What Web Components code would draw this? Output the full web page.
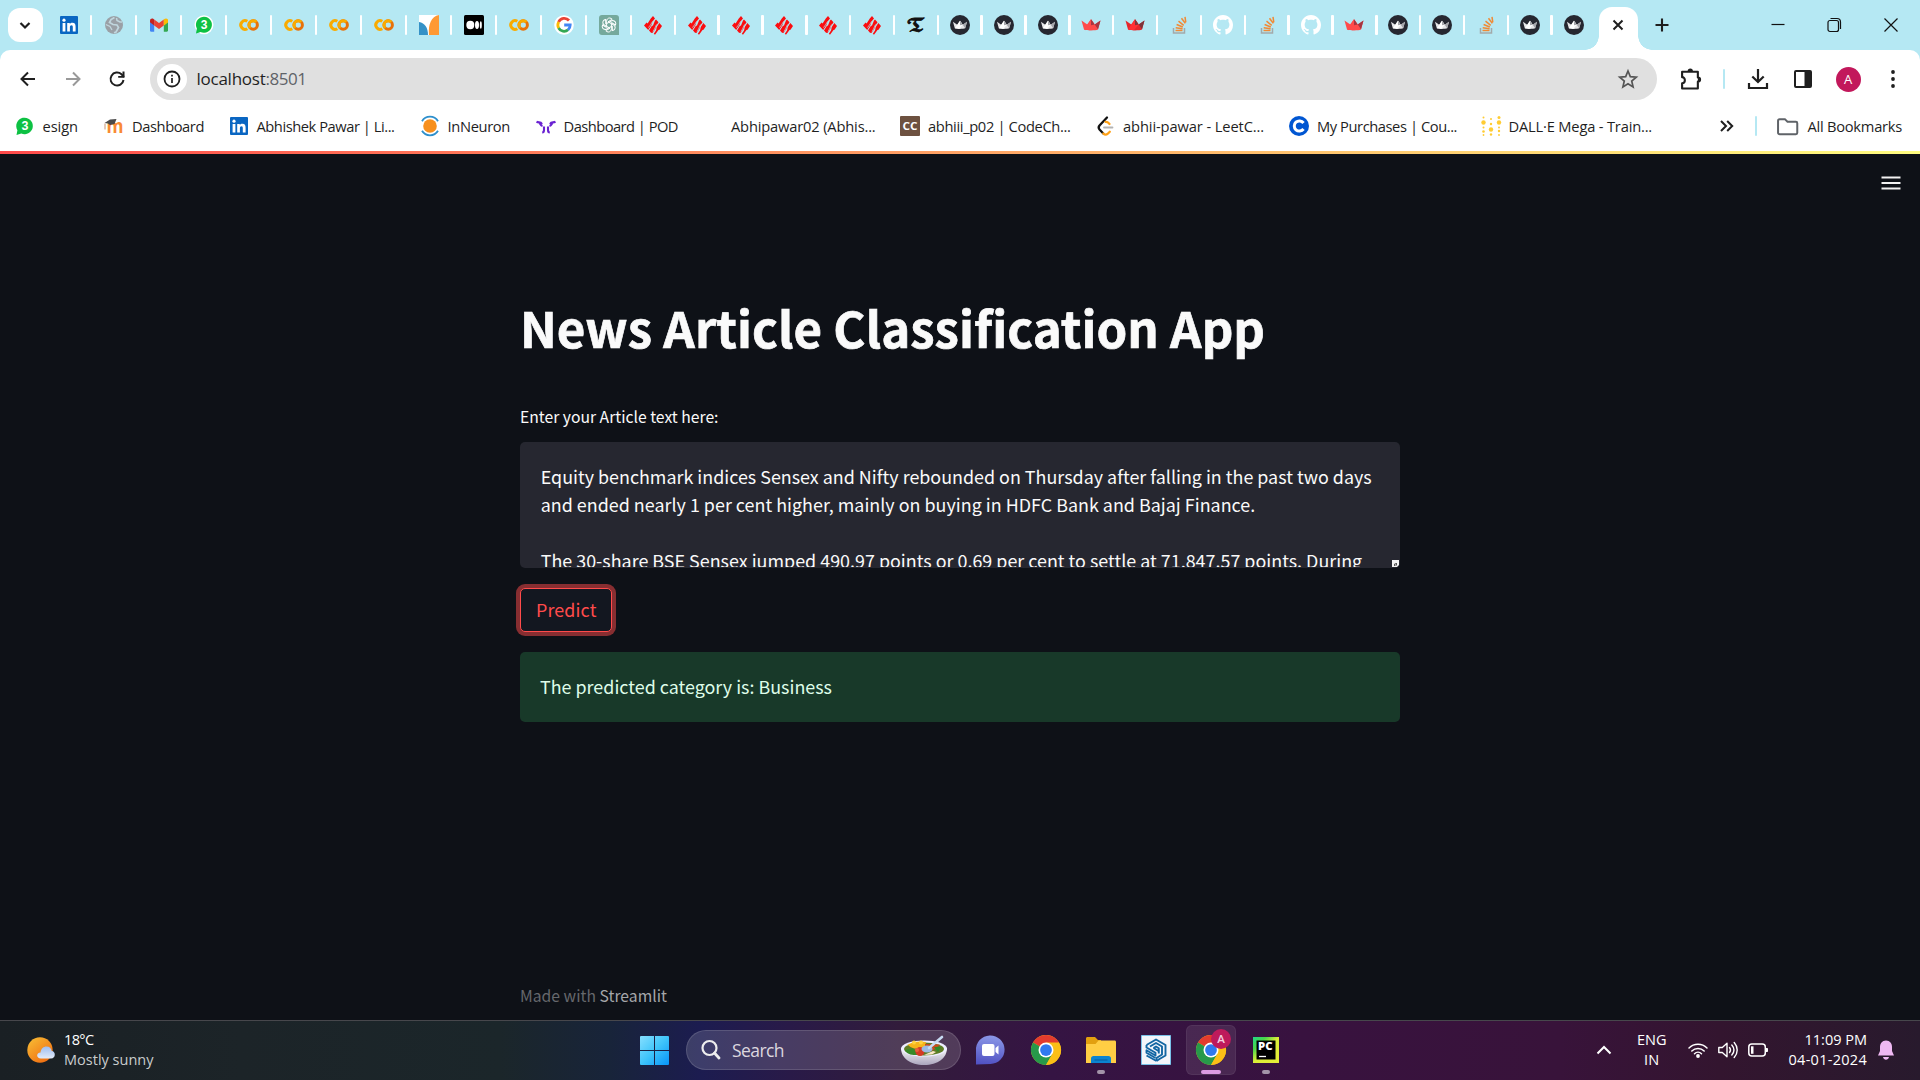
<!DOCTYPE html>
<html lang="en">
<head>
<meta charset="utf-8">
<title>News Article Classification App</title>
<style>
html,body{margin:0;height:100%;overflow:hidden;background:#0e1117}
body{width:1920px;height:1080px}
</style>
</head>
<body>
<desktop-screen></desktop-screen>
<script>
const UI = '"Open Sans","Noto Sans",sans-serif';
const SRC = '"Noto Sans CJK SC","Noto Sans",sans-serif';

const crown = (a,b,c) => `<path d="M.5 5.500 6.300 9.500 10 4.300l3.700 5.200 5.800-4L17 14.500c-2.500 1.200-11.500 1.200-14 0z" fill="${a}"/><path d="M10 4.300l3.700 5.200L9 15.300 3 14.500 6.300 9.500z" fill="${b}"/><path d="M19.500 5.500 13.700 9.500 17 14.300z" fill="${c}"/><path d="M10 4.300v6l3.700-.8z" fill="${c}"/>`;
const chrome = `<circle cx="12" cy="12" r="12" fill="#fbbf16"/><path d="M12 12 1.600 6A12 12 0 0 1 22.400 6z" fill="#e33b2e"/><path d="M1.600 6A12 12 0 0 0 12 24l5.200-9L12 12z" fill="#27994a"/><path d="M12 6H22.400A12 12 0 0 1 12 24l5.200-9z" fill="#fbbf16"/><circle cx="12" cy="12" r="6" fill="#fff"/><circle cx="12" cy="12" r="4.700" fill="#3079ee"/>`;
const ICONS = {
 linkedin:`<rect x="1" y="1" width="18" height="18" rx="1" fill="#0a66c2"/><g fill="#fff"><circle cx="5" cy="5.200" r="1.600"/><path d="M3.600 8h2.800v8.500H3.600zM8.200 8h2.600v1.200C11.300 8.300 12.300 7.800 13.400 7.800c2.500 0 3.200 1.600 3.200 3.900v4.800h-2.800v-4.300c0-1.100-.2-2-1.300-2s-1.600.8-1.600 2v4.300H8.200z"/></g>`,
 globe:`<circle cx="10" cy="10" r="9" fill="#9aa0a6"/><path d="M10.500 2.500 7 4.500l-1.500 3L9 9.500l4 .5 1.500 2.500L12 17l-2 .8" fill="none" stroke="#c0d6de" stroke-width="1.700"/><path d="M12.500 3l.5 2.500 3 1.500h2" fill="none" stroke="#c0d6de" stroke-width="1.500"/><path d="M1.800 9.500 6 11.500 8 15" stroke="#c0d6de" stroke-width="1.300" fill="none"/>`,
 gmail:`<path d="M1 6v9.500c0 .8.500 1.200 1.200 1.200h3V9z" fill="#4285f4"/><path d="M14.800 9v7.700h3c.8 0 1.200-.5 1.200-1.200V6z" fill="#34a853"/><path d="M14.800 4.500 19 5v2.200l-4.200 3.200z" fill="#fbbc04"/><path d="M5.200 10.400V4.400L10 8l4.800-3.600v6L10 14z" fill="#ea4335"/><path d="M1 5.500c0-2 2.200-2.500 3.500-1.600l.7.500v6L1 7.200z" fill="#c5221f"/><path d="M14.800 4.400C16.800 2.900 19 3.500 19 5.500v1.700l-4.200 3.200z" fill="#fbbc04"/>`,
 whatsapp:`<circle cx="10" cy="9.800" r="9.500" fill="#fff"/><path d="M2 18.500 2.900 13.600A8 8 0 1 1 6.500 17z" fill="#0dc143"/><text x="10" y="14.200" text-anchor="middle" font-size="12" font-weight="700" font-family="Liberation Sans" fill="#fff">3</text>`,
 wa2:`<path d="M1.500 19 2.400 14.200A8.300 8.300 0 1 1 6.300 17.600z" fill="#0dc143"/><text x="10" y="14.200" text-anchor="middle" font-size="12.500" font-weight="700" font-family="Liberation Sans" fill="#fff">3</text>`,
 colab:`<g fill="none" stroke-width="3"><circle cx="14.200" cy="10" r="4.200" stroke="#e8710a"/><path d="M8.300 6.300A4.300 4.300 0 1 0 8.300 13.700" stroke="#f9ab00"/><path d="M11.200 13A4.200 4.200 0 0 1 17.200 7" stroke="#f9ab00"/></g>`,
 bars:`<path d="M0 0h20v20H0z" fill="#fff"/><path d="M0 7c6 1 9 6 9 13H0z" fill="#3492c7"/><path d="M10 20c-1-10 2-19 10-20v20z" fill="#ff9933"/>`,
 medium:`<rect width="20" height="20" rx="1.500" fill="#000"/><ellipse cx="6.300" cy="10" rx="4" ry="4.200" fill="#fff"/><ellipse cx="13" cy="10" rx="2" ry="4" fill="#fff"/><ellipse cx="16.800" cy="10" rx="1" ry="3.700" fill="#fff"/>`,
 google:`<circle cx="10" cy="10" r="9.800" fill="#fff"/><g fill="none" stroke-width="2.800"><path d="M15 5.500A6.200 6.200 0 0 0 4.600 7" stroke="#ea4335"/><path d="M4.700 6.900a6.300 6.300 0 0 0 0 6.200" stroke="#fbbc05"/><path d="M4.600 13a6.200 6.200 0 0 0 9.500 1.800" stroke="#34a853"/><path d="M14 14.900c1.500-1.300 2.200-3 2.200-4.900H10.200" stroke="#4285f4"/></g>`,
 openai:`<path d="M3 0h14a3 3 0 0 1 3 3v17H3a3 3 0 0 1-3-3V3a3 3 0 0 1 3-3z" fill="#75a99c"/><g fill="none" stroke="#fff" stroke-width="1">${[0,60,120,180,240,300].map(a=>`<path transform="rotate(${a} 10 10)" d="M7.600 11.400V6.200c0-1.900 1.400-3.200 3-3.200 1.100 0 2 .5 2.600 1.300L9 6.800"/>`).join('')}</g>`,
 ie:`<g fill="#fb0d10"><path d="M1 10.500 3.600 7.500 4.600 8.500 7.800 3.500 10 1l2 2.500-2.500 3-1 3.500-3.300 5z"/><path d="M6 15.500 8.800 11 10 10.500l2-5 1-1 2.500 2.700-2.300 3.500-1 3.200-2.800 4.200L8 17.700z"/></g><path d="M10.800 18.700 13 15.500l.8-3.500 2.500-4 2.700 3-2.500 3.700-1 .3-3.500 4.700z" fill="#fb0d10"/><path d="M5.200 12.500 7 10.800 9.500 6.500M10 16.500l1.500-2.500 2-4.500" stroke="#b5e8f3" stroke-width=".7" fill="none"/>`,
 nyt:`<text x="10" y="16.800" text-anchor="middle" font-size="19" font-family="DejaVu Math TeX Gyre, DejaVu Serif, DejaVu Sans" fill="#111" stroke="#111" stroke-width=".8">𝕿</text>`,
 crownDark:`<circle cx="10" cy="10" r="10" fill="#262730"/><g transform="translate(2.600 2.600) scale(.74)">${crown('#e6e6e8','#fff','#a5a5aa')}</g>`,
 crownRed:crown('#ff4b4b','#ff4b4b','#a53742'),
 crownRed2:crown('#e5262b','#ff2f34','#7d353b'),
 stack:`<path d="M4.500 13v5h11v-5" fill="none" stroke="#a3a9aa" stroke-width="1.500"/><g stroke="#f08a35" stroke-width="1.500"><path d="M6.500 15.500h7M6.700 12.700l6.900 1M7.600 9.500l6.200 2.500M9.500 6.200l5.200 4.200M12.500 3.200l3.800 5.200M16 1.800l.8 5.500"/></g>`,
 github:`<path fill="#fff" transform="scale(1.250)" d="M8 0C3.580 0 0 3.580 0 8c0 3.540 2.290 6.530 5.470 7.590.4.070.55-.17.55-.38 0-.19-.01-.82-.01-1.490-2.010.370-2.530-.490-2.690-.940-.090-.230-.480-.940-.820-1.130-.280-.150-.680-.520-.010-.530.630-.010 1.080.580 1.230.820.720 1.210 1.870.870 2.330.660.070-.520.280-.870.510-1.070-1.780-.200-3.640-.890-3.640-3.950 0-.870.310-1.590.820-2.150-.080-.200-.360-1.020.080-2.120 0 0 .670-.210 2.200.820.640-.180 1.320-.270 2-.270s1.360.090 2 .270c1.530-1.040 2.200-.820 2.200-.820.440 1.100.160 1.920.080 2.120.510.560.820 1.270.820 2.150 0 3.070-1.870 3.750-3.650 3.950.290.250.540.730.540 1.480 0 1.070-.010 1.930-.010 2.200 0 .210.150.460.550.380A8.010 8.010 0 0 0 16 8c0-4.420-3.580-8-8-8z"/>`,
 moodle:`<text x="11" y="17" text-anchor="middle" font-size="20" font-weight="700" font-family="Open Sans" fill="#f98a35" textLength="17" lengthAdjust="spacingAndGlyphs">m</text><path d="M.5 7 6 3.500l6.500-.5-2 5-4.500 1-2-1.500z" fill="#4b4b4b"/><path d="M1 7.500v6" stroke="#d9b9a3" stroke-width="1.500"/>`,
 inneuron:`<circle cx="10" cy="10" r="6.800" fill="#f7901e"/><g fill="none" stroke="#2d8fcc" stroke-width="1.800"><path d="M2 5.200a9.300 9.300 0 0 1 16 0M2 14.800a9.300 9.300 0 0 0 16 0"/></g>`,
 pod:`<g fill="none" stroke="#6a22d2" stroke-width="2.100"><path d="M.5 5.800C3 7 4.500 5.500 6 8M19.500 5.800C17 7 15.500 5.500 14 8"/><path d="M3.500 7c1 1 1.200 2.500 3 3M16.500 7c-1 1-1.200 2.500-3 3"/><path d="M8 10.500v3.500c0 1.500-.8 2.500-1.800 2.500M12 10.500v3.500c0 1.500.8 2.500 1.800 2.500"/></g>`,
 blank:``,
 codechef:`<rect width="20" height="20" rx="1" fill="#6d5140"/><text x="10" y="14" text-anchor="middle" font-size="11" font-weight="700" font-family="Open Sans" textLength="15" lengthAdjust="spacingAndGlyphs" fill="#fff">CC</text>`,
 leet:`<g fill="none" stroke-linecap="round" stroke-width="2.300"><path d="M12 1.500 4.500 9.500c-1 1.200-1 2.800 0 4l3.800 4" stroke="#111"/><path d="M8.300 17.500c1.400 1.400 3.200 1.300 4.500.2l2-2M10.500 5.800c1.200 0 1.900.1 2.500.700l1.500 1.500" stroke="#ffa116"/><path d="M9 11.500h8.500" stroke="#b3b3b3" stroke-width="1.800"/></g>`,
 coursera:`<circle cx="10" cy="10" r="10" fill="#0056d2"/><path d="M14.500 7A5.100 5.100 0 1 0 14.500 13" fill="none" stroke="#fff" stroke-width="3"/>`,
 dots:`<g fill="#ffcc33"><circle cx="2.500" cy="1.500" r="1"/><circle cx="2.500" cy="6.500" r="2.200"/><circle cx="2.500" cy="11.500" r="1"/><circle cx="2.500" cy="15.500" r="1.300"/><circle cx="2.500" cy="19" r=".9"/><circle cx="10" cy="3" r="1"/><circle cx="10" cy="8" r="1.200"/><circle cx="10" cy="13.500" r="2.200"/><circle cx="10" cy="18.500" r="1.200"/><circle cx="18" cy="1.500" r="1.500"/><circle cx="18" cy="6.500" r="2.200"/><circle cx="18" cy="11.500" r="1"/><circle cx="18" cy="15" r="1.200"/><circle cx="18" cy="19" r=".9"/></g>`,
 chevDown:`<path d="m5.500 8 4.500 4.500L14.500 8" fill="none" stroke="#1f1f1f" stroke-width="2.200"/>`,
 back:`<path d="M17 10H4M10 3.500 3.500 10l6.500 6.500" fill="none" stroke="#1f1f1f" stroke-width="2"/>`,
 fwd:`<path d="M3 10h13M10 3.500l6.500 6.500-6.500 6.500" fill="none" stroke="#999" stroke-width="2"/>`,
 reload:`<path d="M16.500 11a6.500 6.500 0 1 1-2-5.700L17 8" fill="none" stroke="#1f1f1f" stroke-width="2"/><path d="M17.500 2.500v6.300h-6.300V6.900h4.300V2.500z" fill="#1f1f1f"/>`,
 info:`<circle cx="10" cy="10" r="7.500" fill="none" stroke="#1f1f1f" stroke-width="1.800"/><path d="M10 9v5M10 5.800v1.700" stroke="#1f1f1f" stroke-width="1.700"/>`,
 star:`<path d="m10 2 2.300 5.600 6 .5-4.600 3.900 1.400 5.900L10 14.800l-5.100 3.100 1.400-5.900-4.600-3.900 6-.5z" fill="none" stroke="#555" stroke-width="1.700"/>`,
 puzzle:`<path d="M2 3.500h15v5.500c2.800 0 2.800 4 0 4V19.500H2v-5c3.500 0 3.500-5.800 0-5.800z" fill="none" stroke="#1f1f1f" stroke-width="2" stroke-linejoin="round"/><path d="M7.300 3a2.500 2.500 0 0 1 5 0z" fill="#1f1f1f"/><path d="M17 8.500c3.600 0 3.600 5 0 5z" fill="#1f1f1f"/>`,
 download:`<path d="M10 0v12.500M4.300 7.500 10 13l5.700-5.500M1 14v5h18v-5" fill="none" stroke="#1f1f1f" stroke-width="2.200"/>`,
 panel:`<rect x="2" y="2" width="16" height="16" rx="1" fill="none" stroke="#1f1f1f" stroke-width="2"/><path d="M11.500 2H18v16h-6.500z" fill="#1f1f1f"/>`,
 more:`<g fill="#1f1f1f"><circle cx="10" cy="3" r="1.900"/><circle cx="10" cy="10" r="1.900"/><circle cx="10" cy="17" r="1.900"/></g>`,
 folder:`<path d="M1 4.500c0-.9.500-1.500 1.500-1.500h5L10 5.500h8c.8 0 1.300.5 1.300 1.300V16c0 .8-.5 1.300-1.300 1.300H2.500C1.600 17.300 1 16.800 1 16z" fill="none" stroke="#5f6368" stroke-width="1.900"/>`,
 more2:`<path d="m4 5 5 5-5 5M10.200 5l5 5-5 5" fill="none" stroke="#1f1f1f" stroke-width="2"/>`,
 close:`<path d="m5.500 5.500 9 9m0-9-9 9" stroke="#1f1f1f" stroke-width="2"/>`,
 plus:`<path d="M10 3.500v13M3.500 10h13" stroke="#1f1f1f" stroke-width="2.100"/>`,
 min:`<path d="M3.500 9.500h13" stroke="#111" stroke-width="1.200"/>`,
 restore:`<rect x="4" y="5.500" width="10.500" height="11" rx="2" fill="none" stroke="#111" stroke-width="1.200"/><path d="M6.500 3.500H13A3.500 3.500 0 0 1 16.500 7v7" fill="none" stroke="#111" stroke-width="1.200"/>`,
 winclose:`<path d="m3.500 3.500 13 13m0-13-13 13" stroke="#111" stroke-width="1.200"/>`,
 burger:`<path d="M.5 4.500h19M.5 10h19M.5 15.500h19" stroke="#f2f2f2" stroke-width="1.900"/>`,
 weather:`<defs><linearGradient id="a" x1="0" y1="0" x2=".8" y2="1"><stop offset="0" stop-color="#f8c036"/><stop offset="1" stop-color="#ef6a10"/></linearGradient><linearGradient id="b" x1="0" y1="0" x2="0" y2="1"><stop offset="0" stop-color="#9dbdf2"/><stop offset="1" stop-color="#e3ebf9"/></linearGradient></defs><circle cx="13" cy="13" r="12.700" fill="url(#a)"/><path d="M14 21.500c-5 0-5-6-.5-6 .5-4 3-6 6-6s4.800 2 5.200 4.500c4 0 4.500 7.500-.7 7.500z" fill="url(#b)"/>`,
 win:`<defs><linearGradient id="w" x1="0" y1="0" x2="1" y2="1"><stop offset="0" stop-color="#86dfff"/><stop offset=".5" stop-color="#3fc4fa"/><stop offset="1" stop-color="#0794f8"/></linearGradient></defs><path d="M1 0h13v14H0V1a1 1 0 0 1 1-1zM15 0h13a1 1 0 0 1 1 1v13H15zM0 15h14v14H1a1 1 0 0 1-1-1zM15 15h14v13a1 1 0 0 1-1 1H15z" fill="url(#w)"/>`,
 search:`<circle cx="8.500" cy="8" r="7" fill="none" stroke="#eee" stroke-width="2.200"/><path d="m13.500 13 4.500 5" stroke="#eee" stroke-width="2.800" stroke-linecap="round"/>`,
 bowl:`<defs><linearGradient id="c" x1="0" y1="0" x2="0" y2="1"><stop offset="0" stop-color="#fafafa"/><stop offset="1" stop-color="#aaa5bd"/></linearGradient></defs><path d="M0 12c0 10 9 17 23 17s23-7 23-17z" fill="url(#c)"/><ellipse cx="23" cy="12.500" rx="23" ry="8" fill="#eef"/><ellipse cx="23" cy="13" rx="20" ry="6.500" fill="#5e7d25"/><path d="M4 14c2 5 8 5 12 5l-4-7z" fill="#398a27"/><path d="M6 9c6-4 14-4 19-3l-1 5c-6 2-12 3-17-2z" fill="#f6b51b"/><circle cx="13" cy="6.500" r="2" fill="#ffd23c"/><circle cx="20" cy="6.500" r="2" fill="#ffd23c"/><path d="M24 8 39 8.500l-7 6-8 0z" fill="#c84b1d"/><path d="M33 11h7l-3 5z" fill="#2f8b2b"/><circle cx="19" cy="15.500" r="4.500" fill="#d43b25"/><circle cx="16" cy="14" r="2" fill="#e8613e"/><path d="M23 19l9-4 3 1-4 2.500z" fill="#fbe7c7"/><ellipse cx="26" cy="13" rx="5.500" ry="3.500" fill="#9cbce5"/><path d="m28 12 13-11" stroke="#c8dcf3" stroke-width="2.600" stroke-linecap="round"/>`,
 chat:`<defs><linearGradient id="d" x1=".6" y1="0" x2=".5" y2="1"><stop offset="0" stop-color="#8c99e8"/><stop offset="1" stop-color="#5152c3"/></linearGradient></defs><path d="M0 28.500V14.500A14.300 14.300 0 1 1 14.500 28z" fill="url(#d)"/><rect x="6" y="8" width="12.500" height="12" rx="2" fill="#fff"/><path d="m19.500 12 3-2.500v9l-3-2.500z" fill="#fff"/>`,
 chrome,
 explorer:`<path d="M0 3.500C0 2.500.7 2 1.500 2h7.500l3 3H15v6H0z" fill="#e2a00f"/><path d="M0 9h9.500l3-3.500H28.500c1 0 1.500.6 1.500 1.500v21H0z" fill="#ffce44"/><path d="M5 28v-4.500c0-1.500 1-2.500 2.500-2.500h15c1.500 0 2.500 1 2.500 2.500V28z" fill="#0b84d0"/><path d="M8.500 25h13" stroke="#075a9c" stroke-width="1"/>`,
 sketchup:`<path d="M.5.500h29v29H.5z" fill="#f3f5fa" stroke="#79c1e8"/><g fill="none" stroke="#1266a3" stroke-width="1.900" stroke-linejoin="round"><path d="M5.500 10 15 4.500l9.500 5.500v10.500l-6 3.500-3 2"/><path d="M9 11.500l6-3.500 6 3.500v8L15.500 23v3"/><path d="M12.500 13 15 11.500l2.800 1.700v5.300"/><path d="M5.500 10v2.500l9 5.200v2.800l-9-5.200v2.500l9 5.200M5.500 20.500 15.500 26M12.500 13l5 3"/></g>`,
 pycharm:`<defs><linearGradient id="p" x1="0" y1="0" x2="1" y2="1"><stop offset="0" stop-color="#21d789"/><stop offset=".25" stop-color="#49d64a"/><stop offset=".5" stop-color="#dbee37"/><stop offset="1" stop-color="#e6ee38"/></linearGradient></defs><rect width="26" height="26" fill="url(#p)"/><path d="M3.500 3.500h19v19h-19z" fill="#000"/><text x="5" y="13" font-family="Open Sans" font-weight="800" font-size="10" textLength="14.500" lengthAdjust="spacingAndGlyphs" fill="#fff">PC</text><path d="M6 19.500h7" stroke="#fff" stroke-width="1.300"/>`,
 up:`<path d="m3.500 13.500 6.500-6.500 6.500 6.500" fill="none" stroke="#fff" stroke-width="2"/>`,
 wifi:`<g fill="none" stroke="#fff" stroke-width="1.500" stroke-linecap="round"><path d="M1 8a12.800 12.800 0 0 1 18 0M3.800 11a8.800 8.800 0 0 1 12.400 0M6.500 13.700a5 5 0 0 1 7 0"/></g><circle cx="10" cy="16" r="1.900" fill="#fff"/>`,
 speaker:`<path d="M.8 7.500h3.500L9 3.200v13.600l-4.700-4.300H.8z" fill="none" stroke="#fff" stroke-width="1.400" stroke-linejoin="round"/><g fill="none" stroke="#fff" stroke-width="1.400" stroke-linecap="round"><path d="M11.500 7.500c1.200 1.500 1.200 3.500 0 5M13.800 5c2.600 3 2.600 7 0 10M16.200 2.500c4 4.500 4 10.500 0 15"/></g>`,
 battery:`<rect x=".8" y="4" width="16.500" height="12" rx="3" fill="none" stroke="#fff" stroke-width="1.500"/><path d="M3 6.300h2.500v7.500H3z" fill="#fff"/><path d="M18 8h1c.7 0 1 .5 1 1v2c0 .5-.3 1-1 1h-1z" fill="#fff"/>`,
 bell:`<path d="M10 .5c-4 0-6 3-6 6.500V11l-2 4.500h16L16 11V7c0-3.500-2-6.500-6-6.500zM7 17h6c-.4 1.800-1.600 2.700-3 2.700S7.400 18.800 7 17z" fill="#efb8f2"/>`
};

class UiIcon extends HTMLElement{
  connectedCallback(){
    const w=this.getAttribute('w')||20,h=this.getAttribute('h')||w,vb=this.getAttribute('box')||'0 0 20 20';
    this.attachShadow({mode:'open'}).innerHTML=`<style>:host{display:block;flex:none;width:${w}px;height:${h}px}svg{display:block;width:100%;height:100%;overflow:visible}</style><svg viewBox="${vb}">${ICONS[this.getAttribute('name')]}</svg>`;
  }
}
customElements.define('ui-icon',UiIcon);

/* A single line of text whose tracking is adjusted to fill a given advance width. */
class FitText extends HTMLElement{
  connectedCallback(){
    const r=this.attachShadow({mode:'open'});
    r.innerHTML=`<style>:host{display:block;flex:none;white-space:pre}span{display:inline-block}</style><span><slot></slot></span>`;
    const s=r.querySelector('span'),w=+this.getAttribute('w');
    s.style.letterSpacing='0px';
    const n=[...this.textContent].length,nat=s.getBoundingClientRect().width;
    s.style.letterSpacing=((w-nat)/n)+'px';
    this.style.width=w+'px';
  }
}
customElements.define('fit-text',FitText);

class TabStrip extends HTMLElement{
  connectedCallback(){
    const a='linkedin globe gmail whatsapp colab colab colab colab bars medium colab google openai'.split(' ');
    const b='ie ie ie ie ie ie nyt crownDark crownDark crownDark crownRed crownRed2 stack github stack github crownRed crownDark crownDark stack crownDark crownDark'.split(' ');
    this.attachShadow({mode:'open'}).innerHTML=`<style>
:host{display:flex;height:50px;background:#b5e8f3;align-items:center}
.list{width:34.500px;height:34px;border-radius:12px;background:#fff;margin-left:8px;display:grid;place-items:center}
.tabs{display:flex;margin-left:3.500px}
.t{width:45px;height:20px;display:flex;justify-content:center;box-sizing:border-box;position:relative}
.t.n{width:43.850px}
.t::after{content:"";position:absolute;right:-1.200px;top:0;width:2.500px;height:20px;border-radius:1px;background:#fff}
.t:last-child::after{display:none}
.act{width:39.500px;height:43px;align-self:flex-end;background:#fff;border-radius:13px 13px 0 0;display:grid;place-items:center;position:relative;margin-left:3px}
.act ui-icon{margin-top:-7px}
.act::before,.act::after{content:"";position:absolute;bottom:0;width:14px;height:14px}
.act::before{left:-14px;background:radial-gradient(circle at 0 0,transparent 13.500px,#fff 14px)}
.act::after{right:-14px;background:radial-gradient(circle at 100% 0,transparent 13.500px,#fff 14px)}
.plus{margin-left:14px}
.win{display:flex;margin-left:auto;gap:36.500px;margin-right:19px}
</style><div class="list"><ui-icon name="chevDown"></ui-icon></div><div class="tabs">${a.map(n=>`<div class="t"><ui-icon name="${n}"></ui-icon></div>`).join('')}${b.map(n=>`<div class="t n"><ui-icon name="${n}"></ui-icon></div>`).join('')}</div><div class="act"><ui-icon name="close"></ui-icon></div><ui-icon class="plus" name="plus"></ui-icon><div class="win"><ui-icon name="min"></ui-icon><ui-icon name="restore" style="margin:0 1px 0 -1px"></ui-icon><ui-icon name="winclose"></ui-icon></div>`;
  }
}
customElements.define('tab-strip',TabStrip);

class BrowserToolbar extends HTMLElement{
  connectedCallback(){
    this.attachShadow({mode:'open'}).innerHTML=`<style>
:host{display:flex;align-items:center;height:58px;background:#fff;border-radius:10px 10px 0 0;padding-left:18px;font:17px/22px ${UI}}
.nav{display:flex;gap:24.700px;width:132px}
.omni{width:1507px;height:42px;border-radius:21px;background:#e0e0e0;display:flex;align-items:center;box-sizing:border-box;padding:0 19.500px 0 6.500px}
.info{width:30px;height:30px;border-radius:50%;background:#fff;display:grid;place-items:center;margin-right:10px}
.h{color:#1f1f1f}.p{color:#5f6368}.star{margin-left:auto}
.r{display:flex;align-items:center;margin-left:23px}
.sep{width:2px;height:20px;background:#b5e8f3;border-radius:1px;margin:0 22.500px 0 22px}
.av{width:25px;height:25px;border-radius:50%;background:#c2185b;color:#fff;font:13px/25px ${UI};text-align:center;margin:0 22px 0 23px}
</style><div class="nav"><ui-icon name="back"></ui-icon><ui-icon name="fwd"></ui-icon><ui-icon name="reload"></ui-icon></div>
<div class="omni"><div class="info"><ui-icon name="info"></ui-icon></div><fit-text class="h" w="69">localhost</fit-text><fit-text class="p" w="41">:8501</fit-text><ui-icon class="star" name="star"></ui-icon></div>
<div class="r"><ui-icon name="puzzle" w="21" style="margin-top:-2px"></ui-icon><div class="sep"></div><ui-icon name="download"></ui-icon><ui-icon name="panel" style="margin-left:25px"></ui-icon><div class="av">A</div><ui-icon name="more"></ui-icon></div>`;
  }
}
customElements.define('browser-toolbar',BrowserToolbar);

class BookmarkItem extends HTMLElement{
  connectedCallback(){
    this.attachShadow({mode:'open'}).innerHTML=`<style>:host{display:flex;align-items:center;flex:none;gap:8px;width:${this.getAttribute('span')}px}::slotted(*){margin-top:-1px}</style><ui-icon name="${this.getAttribute('icon')}"></ui-icon><slot></slot>`;
  }
}
customElements.define('bookmark-item',BookmarkItem);

class BookmarkBar extends HTMLElement{
  connectedCallback(){
    const items=[['wa2',89.5,35.5,'esign'],['moodle',124.5,72,'Dashboard'],['linkedin',191,138,'Abhishek Pawar | Li...'],['inneuron',116,62.500,'InNeuron'],['pod',167.500,114.500,'Dashboard | POD'],['blank',197,144.500,'Abhipawar02 (Abhis...'],['codechef',195,142.500,'abhiii_p02 | CodeCh...'],['leet',194,141,'abhii-pawar - LeetC...'],['coursera',191.500,140,'My Purchases | Cou...'],['dots',236.500,143.500,'DALL·E Mega - Train...']];
    this.attachShadow({mode:'open'}).innerHTML=`<style>
:host{display:flex;align-items:center;height:43px;background:#fff;padding-left:14.500px;font:14.700px/20px ${UI};color:#1f1f1f;box-sizing:border-box}
bookmark-item,.rest{margin-top:-7px}
.rest{display:flex;align-items:center}
.sep{width:2.500px;height:20px;background:#b5e8f3;margin:0 20px 0 17.500px;border-radius:1px}
.all{margin:-1px 0 0 9.500px}
</style>${items.map(([i,s,w,t])=>`<bookmark-item icon="${i}" span="${s}"><fit-text w="${w}">${t}</fit-text></bookmark-item>`).join('')}<div class="rest"><ui-icon name="more2"></ui-icon><div class="sep"></div><ui-icon name="folder" w="21"></ui-icon><fit-text class="all" w="94.500">All Bookmarks</fit-text></div>`;
  }
}
customElements.define('bookmark-bar',BookmarkBar);

class ArticleInput extends HTMLElement{
  connectedCallback(){
    this.attachShadow({mode:'open'}).innerHTML=`<style>
:host{display:block;height:126px;background:#262730;border-radius:5px;box-sizing:border-box;position:relative}
.v{padding:20px 20px 0 20.700px;height:105px;overflow:hidden;font:17.900px/28px ${SRC};color:#fafafa}
.k{position:absolute;right:1px;bottom:1px;width:7px;height:7px}
</style><div class="v"><slot></slot></div><svg class="k" viewBox="0 0 7 7"><path d="M0 0h7v5L5 7H0z" fill="#f4f4f4"/><path d="M2 6V4l2-1h1v2L4 6z" fill="#555"/><path d="M3 5h1" stroke="#fff"/></svg>`;
  }
}
customElements.define('article-input',ArticleInput);

class PredictButton extends HTMLElement{
  connectedCallback(){
    this.attachShadow({mode:'open'}).innerHTML=`<style>:host{display:block}button{display:flex;align-items:center;width:92px;height:44px;box-sizing:border-box;margin:0;padding:0 0 2px 15px;border:1px solid #ff4b4b;border-radius:5px;background:#131720;box-shadow:0 0 0 4px rgba(255,75,75,.5);color:#ff4b4b;font:17.900px/28px ${SRC}}</style><button><slot></slot></button>`;
  }
}
customElements.define('predict-button',PredictButton);

class SuccessAlert extends HTMLElement{
  connectedCallback(){
    this.attachShadow({mode:'open'}).innerHTML=`<style>:host{display:flex;align-items:center;height:70px;box-sizing:border-box;padding:0 20px 2px;border-radius:5px;background:#183929;color:#dffde9;font:17.900px/28px ${SRC}}</style><slot></slot>`;
  }
}
customElements.define('success-alert',SuccessAlert);

class StreamlitApp extends HTMLElement{
  connectedCallback(){
    this.attachShadow({mode:'open'}).innerHTML=`<style>
:host{display:flex;flex-direction:column;height:869px;background:#0e1117;color:#fafafa;font-family:${SRC};box-sizing:border-box}
.deco{height:2.700px;background:linear-gradient(90deg,#ff4b4b,#fffd80);flex:none}
.menu{display:flex;justify-content:flex-end;padding:19px 19.500px 0 0;height:106px;box-sizing:border-box}
main{width:880px;margin:0 auto;display:flex;flex-direction:column;flex:1}
h1{margin:0;font:700 49.200px/66px ${SRC};height:66px;padding-top:34px;-webkit-text-stroke:.7px #fafafa}
.l{font-size:15.700px;line-height:22px;margin-top:46.500px}
article-input{margin-top:13.500px}
predict-button{margin-top:20px}
success-alert{margin-top:20px}
footer{display:flex;margin-top:auto;margin-bottom:13px;font-size:15.700px;line-height:22px;color:#66686d}
footer .s{color:#a5a7aa}
.g{height:28px}
</style><div class="deco"></div><div class="menu"><ui-icon name="burger"></ui-icon></div>
<main><h1><fit-text w="745">News Article Classification App</fit-text></h1>
<fit-text class="l" w="198.500">Enter your Article text here:</fit-text>
<article-input><fit-text w="831">Equity benchmark indices Sensex and Nifty rebounded on Thursday after falling in the past two days</fit-text><fit-text w="714.500">and ended nearly 1 per cent higher, mainly on buying in HDFC Bank and Bajaj Finance.</fit-text><div class="g"></div><fit-text w="821.500">The 30-share BSE Sensex jumped 490.97 points or 0.69 per cent to settle at 71,847.57 points. During</fit-text></article-input>
<predict-button><fit-text w="60.500">Predict</fit-text></predict-button>
<success-alert><fit-text w="292">The predicted category is: Business</fit-text></success-alert>
<footer><fit-text w="79.500">Made with </fit-text><fit-text class="s" w="67.500">Streamlit</fit-text></footer></main>`;
  }
}
customElements.define('streamlit-app',StreamlitApp);

class AppTile extends HTMLElement{
  connectedCallback(){
    const run=this.getAttribute('run'),badge=this.getAttribute('badge');
    this.attachShadow({mode:'open'}).innerHTML=`<style>:host{display:flex;width:55px;height:50px;flex:none;justify-content:center}
.c{width:50px;height:50px;border-radius:6px;display:grid;place-items:center;position:relative;box-sizing:border-box;${badge?'background:rgba(255,255,255,.09);border:1px solid rgba(255,255,255,.06)':''}}
.r{position:absolute;bottom:${badge?0:1}px;left:50%;transform:translateX(-50%);height:4px;border-radius:2px;width:${run==='wide'?20:8}px;background:${run==='wide'?'#dd9be3':'#a394a9'}}
.b{position:absolute;right:3.500px;top:3px;width:20px;height:20px;border-radius:50%;background:#bd1a5b;color:#f3cfdf;font:600 11.500px/20px ${UI};text-align:center}
</style><div class="c"><slot></slot>${run?'<div class="r"></div>':''}${badge?`<div class="b">${badge}</div>`:''}</div>`;
  }
}
customElements.define('app-tile',AppTile);

class TaskBar extends HTMLElement{
  connectedCallback(){
    this.attachShadow({mode:'open'}).innerHTML=`<style>
:host{display:flex;align-items:center;height:60px;box-sizing:border-box;border-top:1px solid #47474c;padding-bottom:1px;font:14.500px/20px ${UI};color:#fff;
background:linear-gradient(90deg,#1a2024 0,#1c2428 240px,#1b262a 500px,#18243a 610px,#1c1c50 700px,#291a48 790px,#321c3b 900px,#351443 1050px,#38123f 1300px,#38133a 1560px,#33152f 1720px,#281a2d 1920px)}
.weather{display:flex;align-items:center;width:613px;padding-left:27px;gap:9px}
.weather .d{color:#c9cccd}
.weather div,.lang,.clock{margin-top:-1px}
.search{display:flex;align-items:center;width:275px;height:40px;box-sizing:border-box;border-radius:20px;border:1px solid rgba(255,255,255,.13);background:rgba(255,255,255,.15);margin:0 2px 0 17px;padding:0 13px 0 13.500px;font-size:17.500px;color:#dcd7df}
.search fit-text{margin-left:11.500px;margin-top:-1px}.search .bowl{margin-left:auto}
.tray{display:flex;align-items:center;margin-left:auto;margin-right:24.500px}
.lang{display:flex;flex-direction:column;align-items:center;margin-left:23px;margin-right:21.500px}
.ic{display:flex;gap:10px}
.clock{display:flex;flex-direction:column;align-items:flex-end;margin-left:20.500px;margin-right:8.500px}
</style>
<div class="weather"><ui-icon name="weather" w="28" h="26" box="0 0 28 26"></ui-icon><div><fit-text w="29.500">18°C</fit-text><fit-text class="d" w="89.500">Mostly sunny</fit-text></div></div>
<ui-icon name="win" w="29" box="0 0 29 29"></ui-icon>
<div class="search"><ui-icon name="search" w="20"></ui-icon><fit-text w="52">Search</fit-text><ui-icon class="bowl" name="bowl" w="46" h="29" box="0 0 46 29"></ui-icon></div>
<app-tile><ui-icon name="chat" w="29" box="0 0 29 29"></ui-icon></app-tile>
<app-tile><ui-icon name="chrome" w="30" box="0 0 24 24"></ui-icon></app-tile>
<app-tile run="dot"><ui-icon name="explorer" w="30" box="0 0 30 30"></ui-icon></app-tile>
<app-tile><ui-icon name="sketchup" w="30" box="0 0 30 30"></ui-icon></app-tile>
<app-tile run="wide" badge="A"><ui-icon name="chrome" w="30" box="0 0 24 24"></ui-icon></app-tile>
<app-tile run="dot"><ui-icon name="pycharm" w="26" box="0 0 26 26"></ui-icon></app-tile>
<div class="tray"><ui-icon name="up"></ui-icon><div class="lang"><fit-text w="29.500">ENG</fit-text><fit-text w="15.500">IN</fit-text></div>
<div class="ic"><ui-icon name="wifi"></ui-icon><ui-icon name="speaker"></ui-icon><ui-icon name="battery"></ui-icon></div>
<div class="clock"><fit-text w="62.500">11:09 PM</fit-text><fit-text w="78.500">04-01-2024</fit-text></div><ui-icon name="bell"></ui-icon></div>`;
  }
}
customElements.define('task-bar',TaskBar);

class DesktopScreen extends HTMLElement{
  connectedCallback(){
    this.attachShadow({mode:'open'}).innerHTML=`<style>:host{display:flex;flex-direction:column;width:1920px;height:1080px;overflow:hidden;background:#0e1117}.bar{background:#b5e8f3}</style>
<tab-strip></tab-strip><div class="bar"><browser-toolbar></browser-toolbar></div><bookmark-bar></bookmark-bar><streamlit-app></streamlit-app><task-bar></task-bar>`;
  }
}
customElements.define('desktop-screen',DesktopScreen);
</script>
</body>
</html>
